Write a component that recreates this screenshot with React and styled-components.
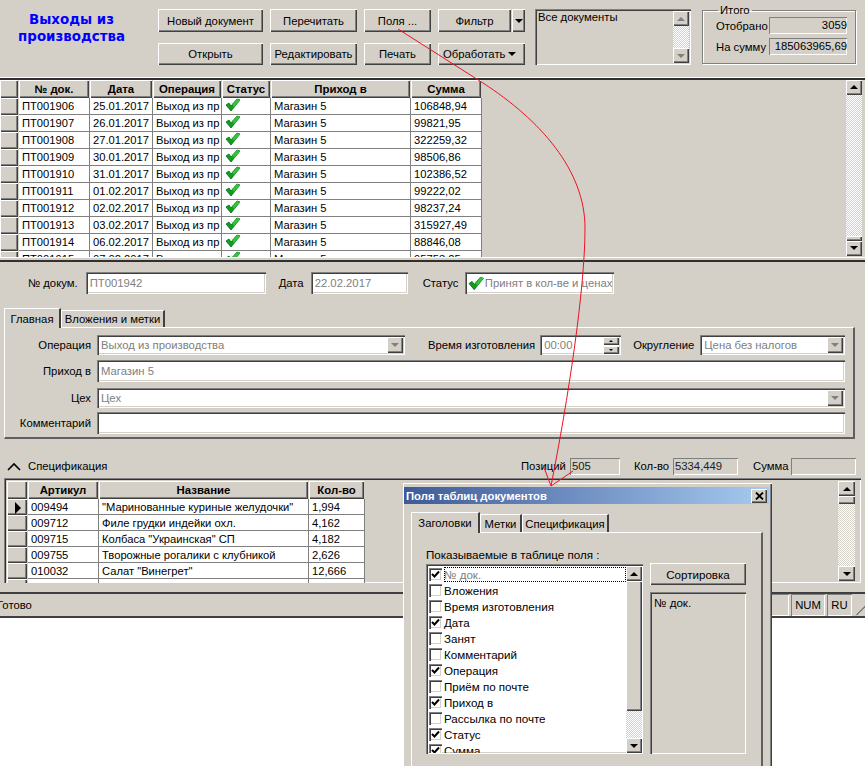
import React from 'react';
import styled, { createGlobalStyle } from 'styled-components';

const GREY = '#d4d0c8';

const GlobalStyle = createGlobalStyle`
    html, body {
        margin: 0;
        height: 100%;
        overflow: hidden;
        background: #fff;
    }
    body {
        font-family: "Liberation Sans", Arial, sans-serif;
        font-size: 11px;
        color: #000;
    }
`;

const raised = `box-shadow: inset 1px 1px 0 #fff, inset -1px -1px 0 #404040, inset -2px -2px 0 #808080;`;
const sunken = `box-shadow: inset 1px 1px 0 #808080, inset 2px 2px 0 #404040, inset -1px -1px 0 #fff, inset -2px -2px 0 ${GREY};`;
const thin = `box-shadow: inset 1px 1px 0 #808080, inset -1px -1px 0 #fff;`;

const Screen = styled.div`
    position: relative;
    width: 865px;
    height: 766px;
    overflow: hidden;
`;

const Window = styled.div`
    width: 865px;
    height: 618px;
    background: ${GREY};
    display: flex;
    flex-direction: column;
    overflow: hidden;
`;

/* top toolbar */
const TopPanel = styled.div`
    height: 79px;
    box-sizing: border-box;
    padding-top: 8px;
    display: flex;
    border-bottom: 1px solid #fff;
    margin-bottom: 0;
`;

const Title = styled.h1`
    margin: 3px 15px 0 0;
    width: 143px;
    font-family: "DejaVu Sans", Verdana, sans-serif;
    font-size: 13.4px;
    line-height: 17px;
    font-weight: bold;
    text-align: center;
    color: #0000ff;
`;

const Buttons = styled.div`
    display: grid;
    grid-template-columns: 105px 87px 67px 87px;
    grid-template-rows: 23px 22px;
    column-gap: 7px;
    row-gap: 11px;
    margin-top: 1px;
`;

const Button = styled.button`
    border: 0;
    padding: 0;
    margin: 0;
    background: ${GREY};
    font: 11.3px "Liberation Sans", Arial, sans-serif;
    color: #000;
    ${raised}
`;

const SplitButton = styled.div`
    display: flex;
    gap: 1px;
`;

const Arrow = styled.span`
    display: inline-block;
    width: 0;
    height: 0;
    border-left: ${(p) => p.$size || 4}px solid transparent;
    border-right: ${(p) => p.$size || 4}px solid transparent;
    border-${(p) => (p.$up ? 'bottom' : 'top')}: ${(p) => p.$size || 4}px solid ${(p) => p.$color || '#000'};
`;

const ArrowButton = styled(Button)`
    width: ${(p) => p.$w || 14}px;
    flex: none;
    display: flex;
    align-items: center;
    justify-content: center;
`;

const WideSplit = styled(Button)`
    flex: 1;
    min-width: 0;
`;

const MenuButton = styled(Button)`
    display: flex;
    align-items: center;
    justify-content: space-between;
    padding: 0 9px 0 5px;
`;

const FilterBox = styled.div`
    margin: 1px 0 0 10px;
    width: 156px;
    height: 56px;
    box-sizing: border-box;
    display: flex;
    justify-content: space-between;
    padding: 2px 2px 2px 3px;
    font-size: 11.3px;
    ${sunken}
`;

const Totals = styled.fieldset`
    margin: -4px 0 0 11px;
    padding: 1px 8px 0 13px;
    width: 154px;
    height: 60px;
    box-sizing: border-box;
    border: 1px solid #808080;
    box-shadow: 1px 1px 0 #fff, inset 1px 1px 0 #fff;
    font-size: 11.3px;

    legend {
        padding: 0 2px;
        margin-left: 2px;
        font-size: 11.3px;
    }
`;

const TotalRow = styled.div`
    display: flex;
    align-items: center;
    justify-content: space-between;
    height: 17px;
    margin-bottom: 4px;
`;

const TotalValue = styled.div`
    width: 78px;
    height: 17px;
    box-sizing: border-box;
    line-height: 17px;
    text-align: right;
    font-size: 11.3px;
    ${thin}
`;

/* scroll bars */
const Scroll = styled.div`
    width: ${(p) => p.$w || 16}px;
    flex: none;
    display: flex;
    flex-direction: column;
    height: ${(p) => p.$h}px;
`;

const ScrollButton = styled.div`
    flex: none;
    height: ${(p) => p.$h || 15}px;
    background: ${GREY};
    display: flex;
    align-items: center;
    justify-content: center;
    ${raised}
`;

const ScrollTrack = styled.div`
    flex: 1;
    min-height: 0;
    background-color: ${GREY};
    background-image: conic-gradient(#fff 25%, ${GREY} 0 50%, #fff 0 75%, ${GREY} 0);
    background-size: 2px 2px;
`;

const ScrollThumb = styled.div`
    flex: none;
    height: ${(p) => p.$h}px;
    background: ${GREY};
    ${raised}
`;

const ScrollBar = ({ height, thumb, disabled, thumbEnd, width }) => {
    const color = disabled ? '#808080' : '#000';
    return (
        <Scroll $h={height} $w={width}>
            <ScrollButton>
                <Arrow $up $color={color} />
            </ScrollButton>
            {thumb && !thumbEnd && <ScrollThumb $h={thumb} />}
            <ScrollTrack />
            {thumb && thumbEnd && <ScrollThumb $h={thumb} />}
            <ScrollButton>
                <Arrow $color={color} />
            </ScrollButton>
        </Scroll>
    );
};

/* data grids */
const GridSection = styled.div`
    height: 184px;
    box-sizing: border-box;
    border-top: 2px solid #303030;
    display: flex;
    justify-content: space-between;
    padding-right: 3px;
    border-bottom: 1px solid #fff;
    overflow: hidden;
`;

const GridClip = styled.div`
    height: ${(p) => p.$h}px;
    overflow: hidden;
    margin-top: ${(p) => p.$top || 0}px;
    margin-left: ${(p) => p.$left || 0}px;
`;

const Table = styled.table`
    border-collapse: separate;
    border-spacing: 0;
    table-layout: fixed;
    width: ${(p) => p.$w}px;
`;

const Th = styled.th`
    height: 18px;
    padding: 0;
    box-sizing: border-box;
    font-weight: bold;
    font-size: 11.4px;
    text-align: center;
    background: ${GREY};
    border-right: 1px solid ${GREY};
    ${raised}
`;

const Td = styled.td`
    height: 16px;
    padding: 0 0 0 3px;
    box-sizing: border-box;
    background: #fff;
    font-size: 11.2px;
    white-space: nowrap;
    overflow: hidden;
    border-right: 1px solid #808080;
    border-bottom: 1px solid #808080;
`;

const Indicator = styled.td`
    height: 16px;
    padding: 0;
    box-sizing: border-box;
    background: ${GREY};
    border-right: 1px solid ${GREY};
    ${raised}
    text-align: center;
    vertical-align: middle;
`;

const Pointer = styled.span`
    display: inline-block;
    width: 0;
    height: 0;
    margin-left: 2px;
    border-top: 6px solid transparent;
    border-bottom: 6px solid transparent;
    border-left: 6px solid #000;
    vertical-align: middle;
`;

const Check = ({ size = 16 }) => (
    <svg width={size} height={size - 2} viewBox="0 0 16 14">
        <path d="M1 7 L4 5 L6 8 L12 1 L15 2 L6 13 Z" fill="#12a012" stroke="#063" strokeWidth="0.8" />
        <path d="M6 4 L8 6 L12 1 L15 2 L9 9 Z" fill="#35c635" />
    </svg>
);

/* document form */
const FormPanel = styled.div`
    border-top: 2px solid #303030;
    margin-top: 2px;
    height: 191px;
    box-sizing: border-box;
    display: flex;
    flex-direction: column;
`;

const HeaderRow = styled.div`
    display: flex;
    align-items: center;
    height: 22px;
    margin: 10px 0 13px 0;
    font-size: 11.3px;
`;

const Label = styled.span`
    flex: none;
    width: ${(p) => (p.$w ? `${p.$w}px` : 'auto')};
    margin-left: ${(p) => p.$ml || 0}px;
    margin-right: ${(p) => p.$mr || 0}px;
    text-align: ${(p) => (p.$right ? 'right' : 'left')};
    font-size: 11.3px;
`;

const Input = styled.div`
    flex: ${(p) => (p.$w ? 'none' : 1)};
    width: ${(p) => (p.$w ? `${p.$w}px` : 'auto')};
    height: ${(p) => p.$h || 22}px;
    box-sizing: border-box;
    background: ${(p) => (p.$plain ? GREY : '#fff')};
    color: #808080;
    font-size: 11.3px;
    padding: 0 2px 0 4px;
    display: flex;
    align-items: center;
    gap: 0;
    white-space: nowrap;
    overflow: hidden;
    ${sunken}
`;

const TabStrip = styled.div`
    display: flex;
    align-items: flex-end;
    height: ${(p) => p.$h || 20}px;
    margin-left: ${(p) => p.$ml || 0}px;
`;

const Tab = styled.div`
    width: ${(p) => p.$w}px;
    height: ${(p) => (p.$active ? p.$h || 20 : (p.$h || 20) - 3)}px;
    box-sizing: border-box;
    display: flex;
    align-items: center;
    justify-content: center;
    font-size: 11.3px;
    background: ${GREY};
    position: relative;
    z-index: ${(p) => (p.$active ? 1 : 0)};
    border-top: 1px solid #fff;
    border-left: 1px solid #fff;
    border-right: 2px solid #404040;
    margin-bottom: ${(p) => (p.$active ? -1 : 0)}px;
`;

const TabBody = styled.div`
    margin: 0 10px 0 4px;
    height: 112px;
    box-sizing: border-box;
    border-top: 1px solid #fff;
    border-left: 1px solid #fff;
    border-right: 2px solid #606060;
    border-bottom: 2px solid #606060;
    padding: 7px 8px 0 0;
    display: flex;
    flex-direction: column;
`;

const FormRow = styled.div`
    display: flex;
    align-items: center;
    margin-bottom: ${(p) => p.$mb || 5}px;
`;

const ComboButton = styled.div`
    flex: none;
    width: 16px;
    height: 16px;
    margin-left: auto;
    background: ${GREY};
    display: flex;
    align-items: center;
    justify-content: center;
    ${raised}
`;

const Spinner = styled.div`
    flex: none;
    margin-left: auto;
    width: 16px;
    display: flex;
    flex-direction: column;
    gap: 1px;
`;

const SpinButton = styled.div`
    height: 8px;
    background: ${GREY};
    display: flex;
    align-items: center;
    justify-content: center;
    ${raised}
`;

const FormSpacer = styled.div`
    flex: none;
    width: 92px;
    margin-right: 0;
`;

/* specification */
const SpecBar = styled.div`
    height: 31px;
    box-sizing: border-box;
    padding-top: 12px;
    display: flex;
    align-items: flex-start;
    font-size: 11.3px;
`;

const SpecValue = styled.div`
    flex: none;
    width: ${(p) => p.$w}px;
    height: 17px;
    box-sizing: border-box;
    line-height: 17px;
    padding-left: 2px;
    font-size: 11.3px;
    color: #202020;
    margin-top: -1px;
    ${thin}
`;

const SpecLabel = styled.span`
    flex: none;
    width: ${(p) => p.$w}px;
    line-height: 15px;
    font-size: 11.3px;
`;

const Caret = styled.svg`
    flex: none;
    margin: 3px 7px 0 7px;
`;

const SpecPanel = styled.div`
    height: 107px;
    margin: 0 4px;
    box-sizing: border-box;
    display: flex;
    justify-content: space-between;
    padding: 3px 6px 0 3px;
    overflow: hidden;
    box-shadow: inset 1px 1px 0 #808080, inset 2px 2px 0 #303030, inset -1px -1px 0 #fff;
`;

const StatusBar = styled.div`
    margin-top: 9px;
    flex: 1;
    border-top: 2px solid #404040;
    border-bottom: 2px solid #404040;
    display: flex;
    align-items: center;
    padding-right: 13px;
    position: relative;
    font-size: 11.3px;
`;

const StatusText = styled.span`
    margin-left: -3px;
    flex: 1;
`;

const StatusCell = styled.div`
    flex: none;
    width: ${(p) => p.$w}px;
    height: 22px;
    margin-left: 2px;
    line-height: 22px;
    text-align: center;
    font-size: 11.3px;
    ${thin}
`;

const Grip = styled.div`
    position: absolute;
    right: 0;
    bottom: 1px;
    width: 11px;
    height: 11px;
    background: linear-gradient(135deg, transparent 55%, #808080 55%, #808080 65%, transparent 65%);
`;

/* fields dialog */
const Dialog = styled.div`
    position: absolute;
    left: 403px;
    top: 483px;
    width: 369px;
    height: 290px;
    box-sizing: border-box;
    background: ${GREY};
    padding: 4px 3px 0 1px;
    box-shadow: inset 1px 1px 0 #fff, inset -1px 0 0 #404040, inset -2px 0 0 #808080;
    font-size: 11.3px;
    z-index: 2;
`;

const DialogTitle = styled.div`
    height: 17px;
    display: flex;
    align-items: center;
    justify-content: space-between;
    padding: 0 2px 0 2px;
    color: #fff;
    font-weight: bold;
    font-size: 11.3px;
    background: linear-gradient(90deg, #3f5a98, #a6caf0);
`;

const CloseButton = styled.div`
    width: 16px;
    height: 14px;
    background: ${GREY};
    display: flex;
    align-items: center;
    justify-content: center;
    ${raised}
`;

const DialogBody = styled.div`
    margin: 0 6px 0 7px;
    padding-top: 7px;
`;

const DialogPanel = styled.div`
    height: 260px;
    box-sizing: border-box;
    border-top: 1px solid #fff;
    border-left: 1px solid #fff;
    border-right: 2px solid #606060;
    padding: 15px 0 0 14px;
`;

const ListTitle = styled.div`
    height: 16px;
    line-height: 14px;
    font-size: 11.6px;
`;

const ListRow = styled.div`
    display: flex;
    gap: 7px;
`;

const List = styled.div`
    width: 217px;
    height: 190px;
    box-sizing: border-box;
    background: #fff;
    display: flex;
    justify-content: space-between;
    padding: 2px 1px 1px 2px;
    ${sunken}
`;

const ListItems = styled.div`
    flex: 1;
    min-width: 0;
    height: 187px;
    overflow: hidden;
`;

const ListItem = styled.div`
    height: 16px;
    display: flex;
    align-items: center;
    padding-left: 1px;
    gap: 2px;
    font-size: 11.6px;
    color: ${(p) => (p.$dim ? '#808080' : '#000')};
`;

const Focus = styled.span`
    flex: 1;
    outline: 1px dotted #000;
    outline-offset: -1px;
    line-height: 15px;
`;

const Box = styled.span`
    flex: none;
    width: 13px;
    height: 13px;
    box-sizing: border-box;
    background: #fff;
    display: flex;
    align-items: center;
    justify-content: center;
    box-shadow: inset 1px 1px 0 #808080, inset 2px 2px 0 #404040, inset -1px -1px 0 #fff, inset -2px -2px 0 ${GREY};
`;

const SideColumn = styled.div`
    display: flex;
    flex-direction: column;
    width: 96px;
    margin-top: -1px;
`;

const SortButton = styled(Button)`
    height: 22px;
    flex: none;
    margin-bottom: 7px;
    font-size: 11.6px;
`;

const SortBox = styled.div`
    height: 162px;
    box-sizing: border-box;
    padding: 4px 4px;
    font-size: 11.6px;
    ${sunken}
`;

/* red annotation drawn over the screenshot */
const Annotation = styled.svg`
    position: absolute;
    left: 0;
    top: 0;
    z-index: 3;
    pointer-events: none;
`;

const docs = [
    ['ПТ001906', '25.01.2017', '106848,94'],
    ['ПТ001907', '26.01.2017', '99821,95'],
    ['ПТ001908', '27.01.2017', '322259,32'],
    ['ПТ001909', '30.01.2017', '98506,86'],
    ['ПТ001910', '31.01.2017', '102386,52'],
    ['ПТ001911', '01.02.2017', '99222,02'],
    ['ПТ001912', '02.02.2017', '98237,24'],
    ['ПТ001913', '03.02.2017', '315927,49'],
    ['ПТ001914', '06.02.2017', '88846,08'],
    ['ПТ001915', '07.02.2017', '95753,25'],
];

const specs = [
    ['009494', '"Маринованные куриные желудочки"', '1,994'],
    ['009712', 'Филе грудки индейки охл.', '4,162'],
    ['009715', 'Колбаса "Украинская" СП', '4,182'],
    ['009755', 'Творожные рогалики с клубникой', '2,626'],
    ['010032', 'Салат "Винегрет"', '12,666'],
    ['', '', ''],
];

const fields = [
    ['№ док.', true],
    ['Вложения', false],
    ['Время изготовления', false],
    ['Дата', true],
    ['Занят', false],
    ['Комментарий', false],
    ['Операция', true],
    ['Приём по почте', false],
    ['Приход в', true],
    ['Рассылка по почте', false],
    ['Статус', true],
    ['Сумма', true],
];

const Tick = () => (
    <svg width="9" height="9" viewBox="0 0 9 9">
        <path d="M1 4 L3.5 6.5 L8 1.5" fill="none" stroke="#000" strokeWidth="2" />
    </svg>
);

const App = () => (
    <Screen>
        <GlobalStyle />
        <Window>
            <TopPanel>
                <Title>Выходы из<br />производства</Title>
                <Buttons>
                    <Button>Новый документ</Button>
                    <Button>Перечитать</Button>
                    <Button>Поля ...</Button>
                    <SplitButton>
                        <WideSplit>Фильтр</WideSplit>
                        <ArrowButton $w={13}><Arrow /></ArrowButton>
                    </SplitButton>
                    <Button>Открыть</Button>
                    <Button>Редактировать</Button>
                    <Button>Печать</Button>
                    <MenuButton>Обработать <Arrow /></MenuButton>
                </Buttons>
                <FilterBox>
                    <span>Все документы</span>
                    <ScrollBar height={52} disabled />
                </FilterBox>
                <Totals>
                    <legend>Итого</legend>
                    <TotalRow>Отобрано <TotalValue>3059</TotalValue></TotalRow>
                    <TotalRow>На сумму <TotalValue>185063965,69</TotalValue></TotalRow>
                </Totals>
            </TopPanel>

            <GridSection>
                <GridClip $h={178} $top={0}>
                    <Table $w={482}>
                        <colgroup>
                            <col width="19" /><col width="71" /><col width="63" /><col width="69" />
                            <col width="49" /><col width="140" /><col width="71" />
                        </colgroup>
                        <thead>
                            <tr>
                                <Th></Th><Th>№ док.</Th><Th>Дата</Th><Th>Операция</Th>
                                <Th>Статус</Th><Th>Приход в</Th><Th>Сумма</Th>
                            </tr>
                        </thead>
                        <tbody>
                            {docs.map((doc) => (
                                <tr key={doc[0]}>
                                    <Indicator />
                                    <Td>{doc[0]}</Td>
                                    <Td>{doc[1]}</Td>
                                    <Td>Выход из пр</Td>
                                    <Td><Check /></Td>
                                    <Td>Магазин 5</Td>
                                    <Td>{doc[2]}</Td>
                                </tr>
                            ))}
                        </tbody>
                    </Table>
                </GridClip>
                <ScrollBar height={176} thumb={5} thumbEnd />
            </GridSection>

            <FormPanel>
                <HeaderRow>
                    <Label $ml={28} $mr={8}>№ докум.</Label>
                    <Input $w={180}>ПТ001942</Input>
                    <Label $ml={13} $mr={7}>Дата</Label>
                    <Input $w={97}>22.02.2017</Input>
                    <Label $ml={15} $mr={7}>Статус</Label>
                    <Input $w={149} style={{ paddingLeft: 3 }}><Check size={17} />Принят в кол-ве и ценах</Input>
                </HeaderRow>
                <TabStrip $ml={4}>
                    <Tab $w={57} $active>Главная</Tab>
                    <Tab $w={104}>Вложения и метки</Tab>
                </TabStrip>
                <TabBody>
                    <FormRow $mb={5}>
                        <Label $w={86} $right $mr={6}>Операция</Label>
                        <Input $w={308} $h={20}>Выход из производства<ComboButton><Arrow $color="#808080" /></ComboButton></Input>
                        <Label $ml={23} $mr={5}>Время изготовления</Label>
                        <Input $w={81} $h={20}>00:00<Spinner><SpinButton><Arrow $up $size={2} /></SpinButton><SpinButton><Arrow $size={2} /></SpinButton></Spinner></Input>
                        <Label $ml={12} $mr={6}>Округление</Label>
                        <Input $h={20}>Цена без налогов<ComboButton><Arrow $color="#808080" /></ComboButton></Input>
                    </FormRow>
                    <FormRow $mb={6}>
                        <Label $w={86} $right $mr={6}>Приход в</Label>
                        <Input>Магазин 5</Input>
                    </FormRow>
                    <FormRow $mb={4}>
                        <Label $w={86} $right $mr={6}>Цех</Label>
                        <Input $h={20}>Цех<ComboButton><Arrow $color="#808080" /></ComboButton></Input>
                    </FormRow>
                    <FormRow $mb={0}>
                        <Label $w={86} $right $mr={6}>Комментарий</Label>
                        <Input />
                    </FormRow>
                </TabBody>
            </FormPanel>

            <SpecBar>
                <Caret width="14" height="9" viewBox="0 0 14 9">
                    <path d="M1 8 L7 2 L13 8" fill="none" stroke="#000" strokeWidth="1.6" />
                </Caret>
                <SpecLabel $w={493}>Спецификация</SpecLabel>
                <SpecLabel $w={49}>Позиций</SpecLabel>
                <SpecValue $w={50}>505</SpecValue>
                <SpecLabel $w={39} style={{ marginLeft: 14 }}>Кол-во</SpecLabel>
                <SpecValue $w={65}>5334,449</SpecValue>
                <SpecLabel $w={38} style={{ marginLeft: 15 }}>Сумма</SpecLabel>
                <SpecValue $w={65} />
            </SpecBar>

            <SpecPanel>
                <GridClip $h={104}>
                    <Table $w={358}>
                        <colgroup>
                            <col width="21" /><col width="71" /><col width="210" /><col width="56" />
                        </colgroup>
                        <thead>
                            <tr><Th></Th><Th>Артикул</Th><Th>Название</Th><Th>Кол-во</Th></tr>
                        </thead>
                        <tbody>
                            {specs.map((row, i) => (
                                <tr key={i}>
                                    <Indicator>{i === 0 && <Pointer />}</Indicator>
                                    <Td>{row[0]}</Td>
                                    <Td>{row[1]}</Td>
                                    <Td>{row[2]}</Td>
                                </tr>
                            ))}
                        </tbody>
                    </Table>
                </GridClip>
                <ScrollBar height={100} thumb={8} width={17} />
            </SpecPanel>

            <StatusBar>
                <StatusText>Готово</StatusText>
                <StatusCell $w={60} />
                <StatusCell $w={34}>NUM</StatusCell>
                <StatusCell $w={25}>RU</StatusCell>
                <Grip />
            </StatusBar>
        </Window>

        <Dialog>
            <DialogTitle>
                Поля таблиц документов
                <CloseButton>
                    <svg width="9" height="8" viewBox="0 0 9 8">
                        <path d="M1 0.5 L8 7.5 M8 0.5 L1 7.5" stroke="#000" strokeWidth="1.8" />
                    </svg>
                </CloseButton>
            </DialogTitle>
            <DialogBody>
                <TabStrip $h={21}>
                    <Tab $w={69} $h={21} $active>Заголовки</Tab>
                    <Tab $w={42} $h={21}>Метки</Tab>
                    <Tab $w={87} $h={21}>Спецификация</Tab>
                </TabStrip>
                <DialogPanel>
                    <ListTitle>Показываемые в таблице поля :</ListTitle>
                    <ListRow>
                        <List>
                            <ListItems>
                                {fields.map(([name, checked], i) => (
                                    <ListItem key={name} $dim={i === 0}>
                                        <Box>{checked && <Tick />}</Box>
                                        {i === 0 ? <Focus>{name}</Focus> : name}
                                    </ListItem>
                                ))}
                            </ListItems>
                            <ScrollBar height={187} thumb={130} />
                        </List>
                        <SideColumn>
                            <SortButton>Сортировка</SortButton>
                            <SortBox>№ док.</SortBox>
                        </SideColumn>
                    </ListRow>
                </DialogPanel>
            </DialogBody>
        </Dialog>

        <Annotation width="865" height="766" viewBox="0 0 865 766">
            <path
                d="M398 29 L483 83 C540 120 585 170 585 228 C585 290 568 400 551 486 M543 465 L551 486 L573 471"
                fill="none"
                stroke="#ee1122"
                strokeWidth="1"
            />
        </Annotation>
    </Screen>
);

export default App;
